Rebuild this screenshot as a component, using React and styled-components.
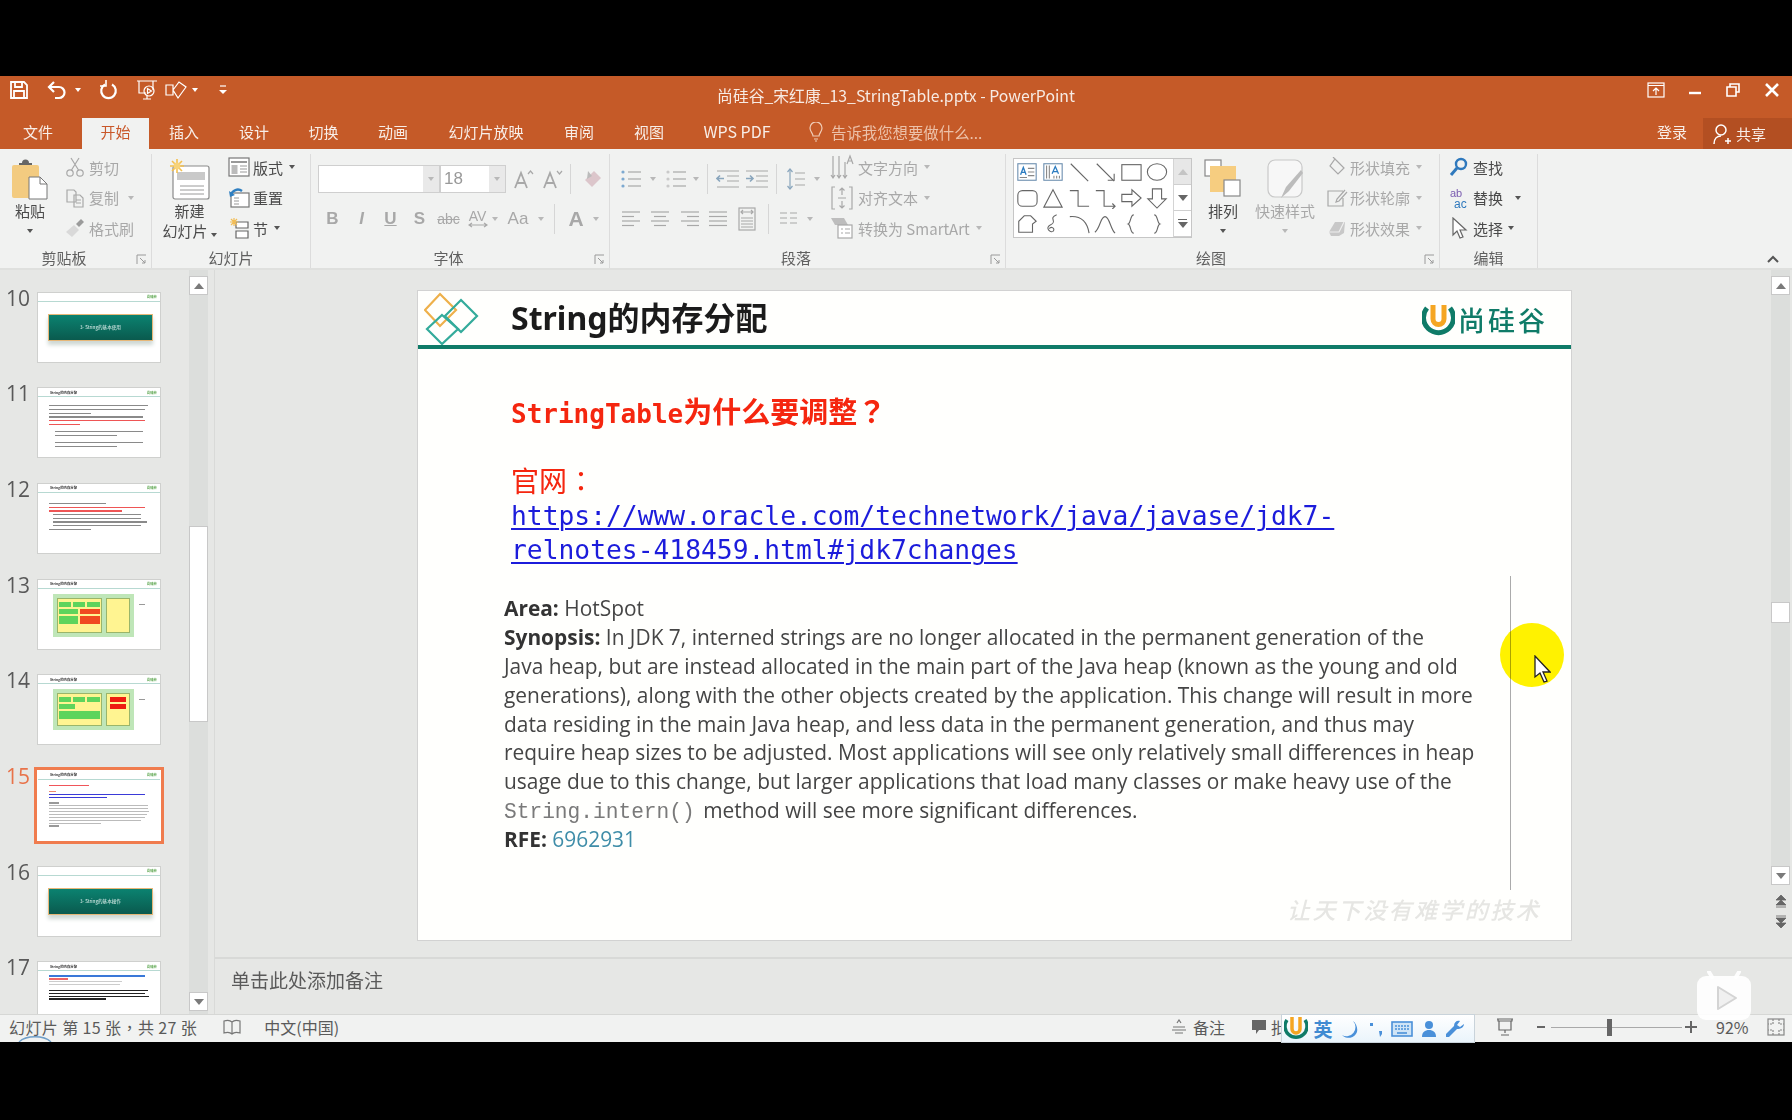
import React from "react";
import styled, { createGlobalStyle } from "styled-components";

const CJK = `"Noto Sans CJK SC", "Noto Sans", sans-serif`;
const ORANGE = "#c55a28";
const TEAL = "#0f7b68";
const DIS = "#a8a8a8";
const INK = "#4a4a4a";

const Global = createGlobalStyle`
  html, body { margin: 0; padding: 0; background: #000; }
  body { font-family: ${CJK}; }
`;

const Screen = styled.div`
  width: 1792px;
  height: 1120px;
  padding: 76px 0 78px;
  box-sizing: border-box;
  background: #000;
  overflow: hidden;
`;

const Win = styled.div`
  height: 966px;
  display: flex;
  flex-direction: column;
  background: #e6e7e5;
  filter: blur(0.45px);
`;

/* ---------- title bar ---------- */
const TitleBar = styled.div`
  height: 42px;
  background: ${ORANGE};
  display: grid;
  grid-template-columns: 1fr auto 1fr;
  color: #f7ebe4;
`;

const Qat = styled.div`
  display: flex;
  align-items: center;
  height: 28px;
  padding-left: 9px;
`;

const QatCell = styled.div`
  width: ${(p) => p.$w}px;
  margin-left: ${(p) => p.$ml || 0}px;
  display: flex;
  justify-content: center;
  align-items: center;
`;

const DocTitle = styled.div`
  font-size: 15.8px;
  line-height: 40px;
  color: #f7ebe4;
`;

const WinCtrls = styled.div`
  display: flex;
  justify-content: flex-end;
  align-items: center;
  height: 28px;
  padding-right: 1px;
`;

const WinBtn = styled.div`
  width: 38.5px;
  display: flex;
  justify-content: center;
`;

/* ---------- tabs ---------- */
const TabBar = styled.div`
  height: 31px;
  background: ${ORANGE};
  display: flex;
  align-items: stretch;
`;

const Tab = styled.div`
  width: ${(p) => p.$w}px;
  margin-right: ${(p) => p.$mr || 0}px;
  text-align: center;
  font-size: ${(p) => p.$fs || 15}px;
  line-height: 27px;
  color: ${(p) => (p.$active ? "#c9582a" : "#f8eee8")};
  background: ${(p) => (p.$active ? "#f1f2f1" : "transparent")};
`;

const TellMe = styled.div`
  margin-left: 19px;
  display: flex;
  align-items: center;
  height: 27px;
  gap: 8px;
  font-size: 15.4px;
  color: #ecc1a9;
`;

const TabRight = styled.div`
  margin-left: auto;
  display: flex;
  align-items: stretch;
`;

const Login = styled.div`
  font-size: 15px;
  line-height: 27px;
  color: #f8eee8;
  margin-right: 16px;
`;

const Share = styled.div`
  width: 89px;
  background: #b34f22;
  display: flex;
  align-items: center;
  padding-left: 9px;
  box-sizing: border-box;
  gap: 4px;
  font-size: 15px;
  color: #f8eee8;
`;

/* ---------- ribbon ---------- */
const Ribbon = styled.div`
  height: 121px;
  box-sizing: border-box;
  background: #f1f2f1;
  border-bottom: 2px solid #dfe0de;
  display: flex;
`;

const Group = styled.div`
  width: ${(p) => p.$w}px;
  box-sizing: border-box;
  position: relative;
  display: flex;
  flex-direction: column;
  margin-top: 5px;
  margin-bottom: 0;
  border-right: 1px solid #dcdcdc;
`;

const GroupBody = styled.div`
  flex: 1;
  display: flex;
  padding-left: ${(p) => p.$pl || 0}px;
  margin-top: -5px;
`;

const GroupLabel = styled.div`
  height: 22px;
  line-height: 24px;
  font-size: 15px;
  color: #5f5f5f;
  text-align: center;
  padding-right: ${(p) => (p.$launcher ? 23 : 0)}px;
`;

const Launcher = styled.svg`
  position: absolute;
  right: 4px;
  bottom: 3px;
`;

const LargeBtn = styled.div`
  width: ${(p) => p.$w}px;
  margin-left: ${(p) => p.$ml || 0}px;
  display: flex;
  flex-direction: column;
  align-items: center;
  padding-top: 10px;
  color: ${(p) => (p.$off ? DIS : INK)};
  font-size: 15px;
  line-height: 20px;
`;

const LargeIcon = styled.div`
  height: 42px;
  display: flex;
  align-items: flex-start;
`;

const SmallCol = styled.div`
  display: flex;
  flex-direction: column;
  padding-top: 3px;
  margin-left: ${(p) => p.$ml || 0}px;
`;

const SmallRow = styled.div`
  height: 30.5px;
  display: flex;
  align-items: center;
  font-size: 15px;
  white-space: nowrap;
  color: ${(p) => (p.$off ? DIS : INK)};
`;

const SmallIcon = styled.div`
  width: ${(p) => p.$w || 24}px;
  margin-right: ${(p) => p.$mr ?? 2}px;
  display: flex;
  justify-content: center;
`;

const Caret = styled.span`
  display: inline-block;
  margin-left: ${(p) => p.$ml ?? 6}px;
  margin-top: ${(p) => p.$mt || 0}px;
  width: 0;
  height: 0;
  border-left: 3.5px solid transparent;
  border-right: 3.5px solid transparent;
  border-top: 4px solid ${(p) => p.$c || (p.$off ? "#b8b8b8" : "#555")};
`;

const TwoRows = styled.div`
  display: flex;
  flex-direction: column;
  padding-top: 10px;
`;

const ToolRow = styled.div`
  height: 40px;
  display: flex;
  align-items: center;
`;

const Cell = styled.div`
  width: ${(p) => p.$w}px;
  margin-left: ${(p) => p.$ml || 0}px;
  height: 26px;
  flex: none;
  display: flex;
  flex-direction: ${(p) => (p.$col ? "column" : "row")};
  align-items: center;
  justify-content: center;
  color: ${DIS};
  font-size: ${(p) => p.$fs || 15}px;
  font-family: "Liberation Sans", sans-serif;
  font-weight: ${(p) => (p.$b ? 700 : 400)};
  font-style: ${(p) => (p.$i ? "italic" : "normal")};
  line-height: ${(p) => (p.$col ? "12px" : "normal")};
  text-decoration: ${(p) => p.$deco || "none"};
`;

const VSep = styled.div`
  width: 1px;
  height: 30px;
  background: #d6d6d6;
  margin: 0 ${(p) => p.$m ?? 8}px;
  flex: none;
`;

const FontBox = styled.div`
  display: flex;
  height: 28px;
  border: 1px solid #cfcfcf;
  box-sizing: border-box;
  background: #fff;
  width: ${(p) => p.$w}px;
  flex: none;
  font-size: 17px;
  font-family: "Liberation Sans", sans-serif;
  color: #999;
  align-items: center;
  padding-left: ${(p) => p.$pl || 0}px;
`;

const FontDrop = styled.div`
  margin-left: auto;
  width: 16px;
  height: 100%;
  background: #e9e9e9;
  display: flex;
  align-items: center;
  justify-content: center;
`;

const Gallery = styled.div`
  margin-top: 9px;
  width: 179px;
  height: 80px;
  flex: none;
  box-sizing: border-box;
  border: 1px solid #c6c6c6;
  background: #fff;
  display: flex;
`;

const GalleryGrid = styled.div`
  width: 159px;
  display: grid;
  grid-template-columns: repeat(6, 26px);
  grid-auto-rows: 26px;
  padding: 0;
  align-items: center;
  justify-items: center;
`;

const GalleryScroll = styled.div`
  flex: 1;
  display: flex;
  flex-direction: column;
  border-left: 1px solid #d4d4d4;
`;

const GalleryBtn = styled.div`
  flex: 1;
  background: ${(p) => (p.$off ? "#e7e7e7" : "#fff")};
  border-bottom: 1px solid #cfcfcf;
  display: flex;
  flex-direction: column;
  gap: 2px;
  align-items: center;
  justify-content: center;
`;

const GalleryDash = styled.div`
  width: 9px;
  height: 1px;
  background: #666;
`;

const Collapse = styled.div`
  flex: 1;
  display: flex;
  align-items: flex-end;
  justify-content: flex-end;
  padding: 0 13px 5px 0;
`;

/* ---------- main ---------- */
const Main = styled.div`
  flex: 1;
  min-height: 0;
  display: flex;
`;

const Side = styled.div`
  width: 215px;
  flex: none;
  display: flex;
  border-right: 1px solid #d9dad8;
  box-sizing: border-box;
`;

const ThumbList = styled.div`
  width: 189px;
  padding-top: 21.5px;
  box-sizing: border-box;
  overflow: hidden;
`;

const ThumbRow = styled.div`
  height: 95.7px;
  display: flex;
  flex: none;
`;

const ThumbNum = styled.div`
  width: 37px;
  padding-left: 6px;
  box-sizing: border-box;
  font-family: "Open Sans", sans-serif;
  font-size: 21px;
  line-height: 12px;
  color: ${(p) => (p.$on ? "#e8734a" : "#595959")};
`;

const Thumb = styled.div`
  width: 124px;
  height: 71px;
  flex: none;
  box-sizing: border-box;
  background: #fff;
  outline: ${(p) => (p.$on ? "3.5px solid #f07c4e" : "1px solid #cfd0ce")};
  outline-offset: ${(p) => (p.$on ? "0" : "-1px")};
  display: flex;
  flex-direction: column;
  overflow: hidden;
  box-shadow: ${(p) => (p.$on ? "0 0 0 3px #f07c4e" : "none")};
`;

const MiniHead = styled.div`
  height: 8px;
  flex: none;
  margin: 1px 1px 0;
  border-bottom: 1px solid #b7d9d2;
  display: flex;
  justify-content: space-between;
  align-items: center;
  padding: 0 3px 0 12px;
  font-size: 3.4px;
  font-weight: 700;
  color: #333;
`;

const MiniLogo = styled.span`
  color: #5aa54c;
  font-size: 3.4px;
`;

const MiniBanner = styled.div`
  margin: 12px 8px 0 11px;
  height: 25px;
  background: linear-gradient(#0b8270, #0a5a4e);
  border: 1px solid #e6b778;
  box-shadow: 0 4px 4px #cfd8d4;
  color: #e8f5f2;
  font-size: 4.6px;
  display: flex;
  align-items: center;
  justify-content: center;
`;

const MiniText = styled.div`
  padding: ${(p) => p.$pt}px 8px 0 ${(p) => p.$pl || 12}px;
  display: flex;
  flex-direction: column;
  gap: ${(p) => p.$gap ?? 2.4}px;
  filter: blur(0.3px);
`;

const MiniLine = styled.div`
  height: ${(p) => p.$h || 1.3}px;
  width: ${(p) => p.$w}%;
  margin-left: ${(p) => p.$ml || 0}px;
  background: ${(p) => p.$c || "#8a8a8a"};
`;

const MiniBoardRow = styled.div`
  display: flex;
  gap: 5px;
  margin: 5px 0 0 16px;
`;

const MiniBoard = styled.div`
  width: 81px;
  height: ${(p) => p.$h}px;
  background: #bfe6b8;
  padding: 4px;
  box-sizing: border-box;
  display: flex;
  gap: 4px;
`;

const MiniNote = styled.div`
  width: 6px;
  height: 1px;
  margin-top: 10px;
  background: #999;
`;

const MiniYellow = styled.div`
  flex: ${(p) => p.$f};
  background: #fff491;
  border: 1px solid #9ab56a;
  padding: 3px 1px 1px;
  display: flex;
  flex-direction: column;
  gap: 2px;
  align-items: ${(p) => (p.$center ? "center" : "stretch")};
`;

const MiniRow = styled.div`
  display: flex;
  gap: 2px;
`;

const MiniBlock = styled.div`
  flex: ${(p) => p.$f || 1};
  height: ${(p) => p.$h || 5}px;
  width: ${(p) => (p.$wd ? `${p.$wd}px` : "auto")};
  background: ${(p) => p.$c || "#5fd45c"};
`;

const VScroll = styled.div`
  width: 19px;
  flex: none;
  display: flex;
  flex-direction: column;
  padding-top: 6px;
  background: #dcdedc;
  height: ${(p) => p.$h}px;
`;

const ScrollBtn = styled.div`
  height: 19px;
  flex: none;
  box-sizing: border-box;
  margin-top: ${(p) => (p.$push ? "auto" : "0")};
  margin-bottom: ${(p) => p.$mb || 0}px;
  background: #fff;
  border: 1px solid #c8c8c8;
  display: flex;
  align-items: center;
  justify-content: center;
`;

const ScrollThumb = styled.div`
  height: ${(p) => p.$h}px;
  flex: none;
  margin-top: ${(p) => p.$mt}px;
  background: #fff;
  border: 1px solid #c8c8c8;
  box-sizing: border-box;
`;

const Editor = styled.div`
  flex: 1;
  min-width: 0;
  display: flex;
  flex-direction: column;
`;

const SlideArea = styled.div`
  height: 689px;
  flex: none;
  display: flex;
  border-bottom: 2px solid #d8d9d7;
  box-sizing: border-box;
`;

const Canvas = styled.div`
  flex: 1;
  padding: 20px 0 0 202px;
`;

const Slide = styled.div`
  width: 1155px;
  height: 651px;
  box-sizing: border-box;
  border: 1px solid #d2d2d2;
  background: #fffffd;
  position: relative;
  overflow: hidden;
`;

const SlideHead = styled.div`
  height: 54px;
  border-bottom: 4px solid ${TEAL};
  display: flex;
  align-items: center;
  padding: 0 23px 0 6px;
`;

const SlideTitle = styled.div`
  margin-left: 31px;
  font-family: "Noto Sans", ${CJK};
  font-weight: 700;
  font-size: 32px;
  color: #1b1b1b;
  line-height: 54px;
`;

const Brand = styled.div`
  margin-left: auto;
  display: flex;
  align-items: center;
  gap: 3px;
  font-size: 27px;
  font-weight: 500;
  color: ${TEAL};
  padding-top: 2px;
  letter-spacing: 3px;
`;

const Heading = styled.div`
  margin: 41px 0 0 93px;
  height: 40px;
  line-height: 40px;
  font-size: 29px;
  font-weight: 700;
  color: #f5260f;
  white-space: nowrap;
`;

const HeadingMono = styled.span`
  font-family: "DejaVu Sans Mono", monospace;
  font-size: 26px;
  font-weight: 700;
`;

const Punct = styled.span`
  font-family: "Noto Sans CJK TC", sans-serif;
`;

const Official = styled.div`
  margin: 32px 0 0 93px;
  height: 37px;
  line-height: 36px;
  font-size: 28px;
  color: #f5260f;
`;

const UrlLine = styled.div`
  margin-left: 93px;
  height: 34px;
  line-height: 34px;
  font-family: "DejaVu Sans Mono", monospace;
  font-size: 26.3px;
  color: #1c1cdb;
  white-space: nowrap;
  text-decoration: underline;
  text-decoration-thickness: 1.5px;
  text-underline-offset: 3px;
`;

const BodyText = styled.div`
  margin: 27px 0 0 86px;
  font-family: "Open Sans", sans-serif;
  font-size: 20.9px;
  line-height: 28.9px;
  color: #454545;
  white-space: nowrap;
`;

const BodyLine = styled.div`
  height: 28.9px;
`;

const Strong = styled.b`
  font-weight: 700;
  color: #333;
`;

const Code = styled.span`
  font-family: "Liberation Mono", monospace;
  font-size: 21.2px;
  color: #7a7a7a;
  margin-right: 3px;
`;

const RfeLink = styled.span`
  color: #3f8da8;
`;

const GuideLine = styled.div`
  position: absolute;
  left: 1092px;
  top: 285px;
  width: 1px;
  height: 314px;
  background: #ababab;
`;

const Highlight = styled.div`
  position: absolute;
  left: 1082px;
  top: 332px;
  width: 64px;
  height: 64px;
  border-radius: 50%;
  background: #fff200;
  mix-blend-mode: multiply;
`;

const Pointer = styled.svg`
  position: absolute;
  left: 1115px;
  top: 364px;
`;

const Watermark = styled.div`
  position: absolute;
  right: 30px;
  bottom: 14px;
  font-size: 23px;
  font-style: italic;
  letter-spacing: 2.4px;
  color: #e6e6e3;
  font-weight: 500;
`;

const RightRail = styled.div`
  width: 19px;
  margin-right: 2px;
  flex: none;
  display: flex;
  flex-direction: column;
  align-items: center;
  gap: 9px;
`;

const NavArrows = styled.div`
  display: flex;
  flex-direction: column;
  align-items: center;
  gap: 7px;
  color: #666;
`;

const Notes = styled.div`
  flex: 1;
  padding-left: 16px;
  font-size: 19px;
  line-height: 41px;
  color: #5a5a5a;
`;

/* ---------- status ---------- */
const Status = styled.div`
  height: 28px;
  flex: none;
  background: #f1f2f1;
  border-top: 1px solid #d6d7d5;
  box-sizing: border-box;
  padding-bottom: 3px;
  display: flex;
  align-items: center;
  font-size: 16px;
  color: #5a5a5a;
  position: relative;
  white-space: nowrap;
`;

const StatusItem = styled.div`
  margin-left: ${(p) => p.$ml}px;
  display: flex;
  align-items: center;
  gap: ${(p) => p.$gap || 0}px;
  flex: none;
  letter-spacing: ${(p) => p.$ls || 0}px;
`;

const Slider = styled.div`
  width: 131px;
  height: 1px;
  background: #a9a9a9;
  position: relative;
  margin-left: 5px;
`;

const SliderKnob = styled.div`
  position: absolute;
  left: 56px;
  top: -8px;
  width: 5px;
  height: 17px;
  background: #666;
`;

const ImeBar = styled.div`
  position: absolute;
  left: 1281px;
  top: -1px;
  width: 194px;
  height: 29px;
  box-sizing: border-box;
  background: linear-gradient(#ffffff, #eaf4fb);
  border: 1px solid #c9d3da;
  display: flex;
  align-items: center;
  padding-left: 2px;
  color: #3f8bd2;
  font-size: 19px;
  font-weight: 700;
`;

const ImeCell = styled.div`
  width: ${(p) => p.$w}px;
  flex: none;
  display: flex;
  justify-content: center;
`;

const PlayBadge = styled.svg`
  position: absolute;
  left: 1696px;
  top: -44px;
`;

const HintArc = styled.svg`
  position: absolute;
  left: 18px;
  bottom: 0;
`;

/* ---------- icons ---------- */
const Svg = ({ w = 20, h = 20, vb, children, ...rest }) => (
  <svg width={w} height={h} viewBox={vb || `0 0 ${w} ${h}`} fill="none" stroke="currentColor" strokeWidth="1.2" {...rest}>
    {children}
  </svg>
);

const LauncherIcon = () => (
  <Launcher width="11" height="11" viewBox="0 0 11 11" fill="none" stroke="#9a9a9a">
    <path d="M1 10V1h9" />
    <path d="M4 4l5 5M9 6v3H6" />
  </Launcher>
);

const PasteIcon = () => (
  <Svg w={38} h={42} stroke="none">
    <rect x="1" y="6" width="27" height="33" rx="2" fill="#f3cb80" />
    <path d="M8 6h13v-2h-3a3.5 3.5 0 0 0-7 0H8z" fill="#666" />
    <path d="M18 18h11l7 7v15H18z" fill="#fff" stroke="#777" strokeWidth="1" />
    <path d="M29 18v7h7" stroke="#777" strokeWidth="1" fill="none" />
  </Svg>
);

const ScissorsIcon = () => (
  <Svg w={20} h={22} stroke={DIS}>
    <circle cx="5" cy="17" r="3.2" />
    <circle cx="15" cy="17" r="3.2" />
    <path d="M6.5 14L14 2M13.5 14L6 2" />
  </Svg>
);

const CopyIcon = () => (
  <Svg w={20} h={20} stroke={DIS}>
    <path d="M2 2h7l2 2v10H2zM9 7h6l3 3v9H9z" />
    <path d="M11 12h5M11 15h5" />
  </Svg>
);

const BrushIcon = () => (
  <Svg w={22} h={20} stroke="none">
    <path d="M2 14l8-7 5 5-7 7z" fill="#d9d9d9" />
    <path d="M12 6l5-5 3 3-5 5z" fill="#9b9b9b" />
  </Svg>
);

const NewSlideIcon = () => (
  <Svg w={42} h={42} stroke="none">
    <rect x="4" y="7" width="36" height="33" rx="2" fill="#fff" stroke="#8a8a8a" strokeWidth="1.2" />
    <rect x="8" y="13" width="28" height="8" fill="#c9c9c9" />
    <path d="M11 27h24M11 31h24M11 35h24" stroke="#9a9a9a" strokeWidth="1" />
    <path d="M8 0v14M1 7h14M3 2l10 10M13 2L3 12" stroke="#f4c04e" strokeWidth="1.6" />
    <circle cx="8" cy="7" r="3.4" fill="#f7d37a" />
  </Svg>
);

const LayoutIcon = () => (
  <Svg w={22} h={20} stroke="#777">
    <rect x="1" y="1" width="20" height="18" fill="#fff" />
    <path d="M3 5h16" stroke="#999" strokeWidth="2" />
    <rect x="3.5" y="8" width="6" height="9" fill="#bbb" stroke="none" />
    <path d="M12 9h7M12 12h7M12 15h7" stroke="#999" />
  </Svg>
);

const ResetIcon = () => (
  <Svg w={22} h={20} stroke="#777">
    <rect x="3" y="5" width="18" height="14" fill="#fff" />
    <path d="M6 10h5M6 13h5M6 16h5" stroke="#999" />
    <path d="M3 7a7 7 0 0 1 11-4" stroke="#2f7fc1" strokeWidth="2.4" />
    <path d="M1 3l1 6 5-2z" fill="#2f7fc1" stroke="none" />
  </Svg>
);

const SectionIcon = () => (
  <Svg w={22} h={22} stroke="#666">
    <path d="M8 5h12v6H8zM8 14h12v7H8z" fill="#fff" />
    <path d="M2 5h8M6 1v8M3 2l6 6M9 2L3 8" stroke="#f2bd55" strokeWidth="1.2" />
  </Svg>
);

const Caps = ({ up }) => (
  <Svg w={22} h={24} stroke={DIS} strokeWidth="1.8">
    <path d="M3 21L9 6l6 15M5.5 16h7" />
    <path d={up ? "M16 7l2.5-3 2.5 3" : "M16 4l2.5 3 2.5-3"} strokeWidth="1.2" />
  </Svg>
);

const Eraser = () => (
  <Svg w={22} h={22} stroke="none">
    <path d="M4 12l9-9 7 7-9 9z" fill="#dcc6cb" />
    <path d="M7 3l-1 8 5-3z" fill="#bbb" />
  </Svg>
);

const Bullets = ({ num }) => (
  <Svg w={22} h={20} stroke={DIS}>
    {[3, 10, 17].map((y) => (
      <React.Fragment key={y}>
        <path d={`M8 ${y}h13`} />
        <circle cx="3" cy={y} r="1.6" fill={num ? "#c9c9c9" : "#7da9d0"} stroke="none" />
      </React.Fragment>
    ))}
  </Svg>
);

const Indent = ({ flip }) => (
  <Svg w={24} h={20} stroke={DIS}>
    <path d="M1 2h22M11 7h12M11 12h12M1 18h22" />
    <path d={flip ? "M1 9.5h7M5 6.5l3 3-3 3" : "M8 9.5H1M4 6.5l-3 3 3 3"} stroke="#8aa6bd" strokeWidth="1.6" />
  </Svg>
);

const LineSpacing = () => (
  <Svg w={20} h={24} stroke={DIS}>
    <path d="M4 2v20" stroke="#8aa6bd" />
    <path d="M1.5 5L4 2l2.500 3M1.500 19L4 22l2.500-3" stroke="#8aa6bd" />
    <path d="M9 6h10M9 12h10M9 18h10" />
  </Svg>
);

const Align = ({ mode }) => {
  const rows = mode === "j" ? [18, 18, 18, 18] : [18, 12, 18, 12];
  return (
    <Svg w={20} h={18} stroke={DIS}>
      {rows.map((len, i) => {
        const x = mode === "c" ? (20 - len) / 2 : mode === "r" ? 20 - len : 1;
        return <path key={i} d={`M${x} ${2 + i * 4.500}h${len}`} />;
      })}
    </Svg>
  );
};

const Distribute = () => (
  <Svg w={20} h={24} stroke={DIS}>
    <rect x="2" y="1" width="16" height="22" />
    <path d="M4 5h12M6 3L4 5l2 2M14 3l2 2-2 2M4 11h12M4 14h12M4 17h12M4 20h12" />
  </Svg>
);

const Columns = () => (
  <Svg w={20} h={18} stroke={DIS}>
    <path d="M1 3h7M1 8h7M1 13h7M11 3h7M11 8h7M11 13h7" />
  </Svg>
);

const TextDir = () => (
  <Svg w={24} h={26} stroke={DIS}>
    <path d="M3 2v22M9 2v22M15 8v16M1 21l2 3 2-3M7 21l2 3 2-3M13 21l2 3 2-3" />
    <path d="M17 10l3-8 3 8M18 7h4" />
  </Svg>
);

const AlignText = () => (
  <Svg w={24} h={26} stroke={DIS}>
    <path d="M5 2H2v22h3M19 2h3v22h-3" />
    <path d="M12 3v7M9.500 5.500L12 3l2.500 2.500M12 23v-7M9.500 20.500L12 23l2.500-2.500M8 13h8" />
  </Svg>
);

const SmartIcon = () => (
  <Svg w={24} h={24} stroke="none">
    <path d="M1 2h13l4 7H5z" fill="#bdbdbd" />
    <rect x="8" y="9" width="14" height="13" fill="#fff" stroke={DIS} />
    <path d="M11 13h2M15 13h5M11 17h2M15 17h5" stroke={DIS} />
  </Svg>
);

const S = { width: 22, height: 22, viewBox: "0 0 24 24", fill: "none", stroke: "#666", strokeWidth: 1.2 };

const SHAPES = [
  <svg {...S} key="tb"><rect x="2" y="3" width="20" height="18" stroke="#6d8fb0" /><path d="M5 15l3-8 3 8M6 12.500h4" stroke="#2c7cc0" strokeWidth="1.400" /><path d="M13 8h7M13 12h7M13 16h7M4 18h8" stroke="#888" /></svg>,
  <svg {...S} key="vt"><rect x="2" y="3" width="20" height="18" stroke="#6d8fb0" /><path d="M11 14l3.500-8 3.500 8M12 11.500h5" stroke="#2c7cc0" strokeWidth="1.400" /><path d="M5 5v14M8 5v14" stroke="#888" /><path d="M13 16v3M16 16v3M19 16v3" stroke="#888" /></svg>,
  <svg {...S} key="ln"><path d="M3 3l19 19" /></svg>,
  <svg {...S} key="ar"><path d="M3 3l19 19M15 21h7v-7" /></svg>,
  <svg {...S} key="rc"><rect x="2" y="4" width="21" height="17" /></svg>,
  <svg {...S} key="ov"><ellipse cx="12" cy="12" rx="10.500" ry="9" /></svg>,
  <svg {...S} key="rr"><rect x="2" y="4" width="21" height="17" rx="5" /></svg>,
  <svg {...S} key="tr"><path d="M12 3l10 19H2z" /></svg>,
  <svg {...S} key="el"><path d="M2 4h9v17h12" /></svg>,
  <svg {...S} key="ea"><path d="M2 4h9v17h12M20 18l3 3-3 3" /></svg>,
  <svg {...S} key="ra"><path d="M2 8h11V3l10 9-10 9v-5H2z" /></svg>,
  <svg {...S} key="da"><path d="M7 2h10v11h5l-10 10L2 13h5z" /></svg>,
  <svg {...S} key="sn"><path d="M3 21V9l6-6h7l6 6-4 3v9z" /></svg>,
  <svg {...S} key="sq"><path d="M16 2C6 6 18 9 9 13c-6 3 0 9 3 7 3-3-2-6-4-3" /></svg>,
  <svg {...S} key="cv"><path d="M2 4c12-1 19 6 21 18" /></svg>,
  <svg {...S} key="sc"><path d="M1 21C7 16 7 4 12 4s6 14 11 18" /></svg>,
  <svg {...S} key="lb"><path d="M15 2c-4 0-3 9-6 10 3 1 2 10 6 10" /></svg>,
  <svg {...S} key="rb"><path d="M9 2c4 0 3 9 6 10-3 1-2 10-6 10" /></svg>,
];

const TriUp = ({ c = "#7a7a7a" }) => <svg width="10" height="6"><path d="M0 6l5-6 5 6z" fill={c} /></svg>;
const TriDown = ({ c = "#7a7a7a" }) => <svg width="10" height="6"><path d="M0 0l5 6 5-6z" fill={c} /></svg>;

const Logo = () => (
  <svg width="33" height="33" viewBox="0 0 33 33" fill="none">
    <path d="M5 5a15 15 0 1 0 23 0" stroke={TEAL} strokeWidth="5" />
    <path d="M11 2v14a5.500 5.500 0 0 0 11 0V2" stroke="#f5a623" strokeWidth="5" />
  </svg>
);

const Diamonds = () => (
  <svg width="56" height="54" viewBox="0 0 56 54" fill="none" strokeWidth="2.200">
    <path d="M16 3l16 16-16 16L1 19z" stroke="#eeb04a" />
    <path d="M37 9l16 16-16 16-16-16z" stroke="#33ab9b" />
    <path d="M18 24l16 14-16 15L3 38z" stroke="#33ab9b" />
  </svg>
);

const Arrow = () => (
  <Pointer width="18" height="28" viewBox="0 0 18 28">
    <path d="M2 1v21l5-4 4 9 3-1-4-9h7z" fill="#fff" stroke="#222" strokeWidth="1.300" />
  </Pointer>
);

const DoubleArrow = ({ down }) => (
  <Svg w={12} h={14} stroke="none">
    {down ? (
      <path d="M1 1h10M1 3l5 5 5-5zM1 8l5 5 5-5z" fill="#666" stroke="#666" strokeWidth="0.800" />
    ) : (
      <path d="M1 13h10M1 11l5-5 5 5zM1 6l5-5 5 5z" fill="#666" stroke="#666" strokeWidth="0.800" />
    )}
  </Svg>
);

/* ---------- thumbnails ---------- */
const textBars = (rows) => rows.map((r, i) => <MiniLine key={i} $w={r[0]} $c={r[1]} $ml={r[2]} />);

const Banner = ({ text }) => (
  <>
    <MiniHead><span /><MiniLogo>尚硅谷</MiniLogo></MiniHead>
    <MiniBanner>{text}</MiniBanner>
  </>
);

const Head = () => (
  <MiniHead>String的内存分配<MiniLogo>尚硅谷</MiniLogo></MiniHead>
);

const THUMBS = [
  { n: 10, body: <Banner text="3- String的基本使用" /> },
  { n: 11, body: (
    <>
      <Head />
      <MiniText $pt={8}>
        {textBars([[95], [92], [40], [90], [92, "#e55"], [30, "#e55"]])}
        <MiniLine $w={0} />
        {textBars([[85, null, 6], [60, null, 6]])}
        <MiniLine $w={0} />
        {textBars([[85, null, 6], [60, null, 6]])}
      </MiniText>
    </>
  ) },
  { n: 12, body: (
    <>
      <Head />
      <MiniText $pt={10}>
        {textBars([[55], [92, "#e55"], [70, "#e55"], [85, null, 4], [85, null, 4], [90, null, 4], [85, null, 4], [40]])}
      </MiniText>
    </>
  ) },
  { n: 13, body: (
    <>
      <Head />
      <MiniBoardRow>
        <MiniBoard $h={43}>
          <MiniYellow $f={2}>
            <MiniRow><MiniBlock /><MiniBlock /><MiniBlock /></MiniRow>
            <MiniRow><MiniBlock /><MiniBlock $c="#f04a20" /></MiniRow>
            <MiniRow><MiniBlock $h={8} /><MiniBlock $h={8} $c="#f04a20" /></MiniRow>
          </MiniYellow>
          <MiniYellow $f={1} />
        </MiniBoard>
        <MiniNote />
      </MiniBoardRow>
    </>
  ) },
  { n: 14, body: (
    <>
      <Head />
      <MiniBoardRow>
        <MiniBoard $h={41}>
          <MiniYellow $f={2}>
            <MiniRow><MiniBlock /><MiniBlock /><MiniBlock /></MiniRow>
            <MiniRow><MiniBlock $wd={16} $f="none" /></MiniRow>
            <MiniRow><MiniBlock $h={8} /></MiniRow>
          </MiniYellow>
          <MiniYellow $f={1} $center>
            <MiniBlock $f="none" $wd={16} $c="#ee1c10" />
            <MiniBlock $f="none" $wd={16} $c="#ee1c10" />
          </MiniYellow>
        </MiniBoard>
        <MiniNote />
      </MiniBoardRow>
    </>
  ) },
  { n: 15, on: true, body: (
    <>
      <Head />
      <MiniText $pt={5} $gap={1.600}>
        {textBars([[38, "#f0555a"]])}
        <MiniLine $w={0} />
        {textBars([[7, "#ee8870"], [92, "#3a3ad8"], [56, "#3a3ad8"]])}
        <MiniLine $w={0} />
        {textBars([[10, "#999"], [95, "#bbb"], [95, "#bbb"], [96, "#bbb"], [94, "#bbb"], [92, "#bbb"], [88, "#bbb"], [50, "#bbb"], [10, "#999"]])}
      </MiniText>
    </>
  ) },
  { n: 16, body: <Banner text="3- String的基本操作" /> },
  { n: 17, body: (
    <>
      <Head />
      <MiniText $pt={4} $gap={1.600}>
        {textBars([[92, "#3a78d8"], [18, "#e66"], [70, "#ccc"], [68, "#ccc"]])}
        <MiniLine $w={0} />
        {textBars([[95, "#222"], [92, "#222"], [96, "#222"], [55, "#222"]])}
      </MiniText>
    </>
  ) },
];

const BODY = [
  <><Strong>Area:</Strong> HotSpot</>,
  <><Strong>Synopsis:</Strong> In JDK 7, interned strings are no longer allocated in the permanent generation of the</>,
  "Java heap, but are instead allocated in the main part of the Java heap (known as the young and old",
  "generations), along with the other objects created by the application. This change will result in more",
  "data residing in the main Java heap, and less data in the permanent generation, and thus may",
  "require heap sizes to be adjusted. Most applications will see only relatively small differences in heap",
  "usage due to this change, but larger applications that load many classes or make heavy use of the",
  <><Code>String.intern()</Code> method will see more significant differences.</>,
  <><Strong>RFE:</Strong> <RfeLink>6962931</RfeLink></>,
];

const TABS = [
  { t: "文件", w: 76, mr: 6 }, { t: "开始", w: 67, on: true }, { t: "插入", w: 70 }, { t: "设计", w: 70 },
  { t: "切换", w: 69 }, { t: "动画", w: 70 }, { t: "幻灯片放映", w: 116 }, { t: "审阅", w: 70 },
  { t: "视图", w: 70 }, { t: "WPS PDF", w: 106, fs: 16 },
];

const App = () => (
  <Screen>
    <Global />
    <Win>
      <TitleBar>
        <Qat>
          <QatCell $w={20}>
            <Svg w={20} h={20} stroke="#fff" strokeWidth="1.800">
              <path d="M2 2h13l3 3v13H2z" /><path d="M6 2v5h7V2M5 18v-7h10v7" />
            </Svg>
          </QatCell>
          <QatCell $w={28} $ml={14}>
            <Svg w={20} h={20} stroke="#fff" strokeWidth="2.200">
              <path d="M3 7h9a5 5 0 0 1 0 11H8" /><path d="M7 2L2 7l5 5" />
            </Svg>
          </QatCell>
          <QatCell $w={14}><Caret $ml={0} $c="#fff" /></QatCell>
          <QatCell $w={48}>
            <Svg w={20} h={20} stroke="#fff" strokeWidth="2.200">
              <path d="M13 4.500A7.300 7.300 0 1 1 6 4.500" /><path d="M7 0v6H1" strokeWidth="1.600" />
            </Svg>
          </QatCell>
          <QatCell $w={28}>
            <Svg w={22} h={22} stroke="#fff">
              <path d="M1 2h20M3 2v12h7M17 11V2M7 20h8M11 17v3" /><circle cx="13" cy="12" r="5" /><path d="M11.500 9.500v5l4-2.500z" />
            </Svg>
          </QatCell>
          <QatCell $w={30}>
            <Svg w={22} h={22} stroke="#fff">
              <path d="M1 6h7v10H1zM8 11l6-8 7 5-8 11z" />
            </Svg>
          </QatCell>
          <QatCell $w={8}><Caret $ml={0} $c="#fff" /></QatCell>
          <QatCell $w={48}>
            <Svg w={10} h={12} stroke="#fff"><path d="M2 2h6" /><path d="M1 6h8l-4 4z" fill="#fff" stroke="none" /></Svg>
          </QatCell>
        </Qat>
        <DocTitle>尚硅谷_宋红康_13_StringTable.pptx - PowerPoint</DocTitle>
        <WinCtrls>
          <WinBtn>
            <Svg w={18} h={16} stroke="#fff"><rect x="1" y="1" width="16" height="14" /><path d="M1 3.500h16M9 13V6M6 9l3-3 3 3" /></Svg>
          </WinBtn>
          <WinBtn><Svg w={14} h={14} stroke="#fff" strokeWidth="2.400"><path d="M1 10h12" /></Svg></WinBtn>
          <WinBtn>
            <Svg w={14} h={14} stroke="#fff" strokeWidth="1.600"><path d="M4 4V1h9v8h-3M1 4h9v9H1z" /></Svg>
          </WinBtn>
          <WinBtn><Svg w={14} h={14} stroke="#fff" strokeWidth="2.600"><path d="M1 1l12 12M13 1L1 13" /></Svg></WinBtn>
        </WinCtrls>
      </TitleBar>

      <TabBar>
        {TABS.map((x) => <Tab key={x.t} $w={x.w} $mr={x.mr} $fs={x.fs} $active={x.on}>{x.t}</Tab>)}
        <TellMe>
          <Svg w={14} h={20} stroke="#f0cdb8"><path d="M4 14c0-3-3-4-3-8a6 6 0 0 1 12 0c0 4-3 5-3 8zM5 17h4M6 19h2" /></Svg>
          告诉我您想要做什么...
        </TellMe>
        <TabRight>
          <Login>登录</Login>
          <Share>
            <Svg w={20} h={22} stroke="#fff" strokeWidth="1.500">
              <circle cx="9" cy="7" r="5" /><path d="M2 21c0-5 3-8 7-8M13 18h6M16 15v6" />
            </Svg>
            共享
          </Share>
        </TabRight>
      </TabBar>

      <Ribbon>
        <Group $w={152}>
          <GroupBody>
            <LargeBtn $w={60}>
              <LargeIcon><PasteIcon /></LargeIcon>
              粘贴
              <Caret $ml={0} $mt={8} />
            </LargeBtn>
            <SmallCol $ml={3}>
              <SmallRow $off><SmallIcon><ScissorsIcon /></SmallIcon>剪切</SmallRow>
              <SmallRow $off><SmallIcon><CopyIcon /></SmallIcon>复制<Caret $off $ml={9} /></SmallRow>
              <SmallRow $off><SmallIcon><BrushIcon /></SmallIcon>格式刷</SmallRow>
            </SmallCol>
          </GroupBody>
          <GroupLabel $launcher>剪贴板</GroupLabel>
          <LauncherIcon />
        </Group>

        <Group $w={159}>
          <GroupBody>
            <LargeBtn $w={75}>
              <LargeIcon><NewSlideIcon /></LargeIcon>
              新建
              <span>幻灯片<Caret $ml={3} /></span>
            </LargeBtn>
            <SmallCol>
              <SmallRow><SmallIcon><LayoutIcon /></SmallIcon>版式<Caret /></SmallRow>
              <SmallRow><SmallIcon><ResetIcon /></SmallIcon>重置</SmallRow>
              <SmallRow><SmallIcon><SectionIcon /></SmallIcon>节<Caret /></SmallRow>
            </SmallCol>
          </GroupBody>
          <GroupLabel>幻灯片</GroupLabel>
        </Group>

        <Group $w={299}>
          <GroupBody $pl={7}>
            <TwoRows>
              <ToolRow>
                <FontBox $w={122}><FontDrop><Caret $off $ml={0} /></FontDrop></FontBox>
                <FontBox $w={66} $pl={3}>18<FontDrop><Caret $off $ml={0} /></FontDrop></FontBox>
                <Cell $w={29} $ml={2}><Caps up /></Cell>
                <Cell $w={29}><Caps /></Cell>
                <VSep $m={4} />
                <Cell $w={34}><Eraser /></Cell>
              </ToolRow>
              <ToolRow>
                <Cell $w={29} $b $fs={17}>B</Cell>
                <Cell $w={29} $i $b $fs={17}>I</Cell>
                <Cell $w={29} $deco="underline" $b $fs={17}>U</Cell>
                <Cell $w={29} $b $fs={17}>S</Cell>
                <Cell $w={29} $fs={14} $deco="line-through">abc</Cell>
                <Cell $w={29} $fs={14} $col>
                  AV
                  <Svg w={20} h={6} stroke={DIS}><path d="M1 3h18M4 1L1 3l3 2M16 1l3 2-3 2" /></Svg>
                </Cell>
                <Caret $off $ml={0} />
                <Cell $w={40} $fs={17}>Aa</Cell>
                <Caret $off $ml={0} />
                <VSep $m={10} />
                <Cell $w={22} $fs={21} $b>A</Cell>
                <Caret $off $ml={6} />
              </ToolRow>
            </TwoRows>
          </GroupBody>
          <GroupLabel $launcher>字体</GroupLabel>
          <LauncherIcon />
        </Group>

        <Group $w={396}>
          <GroupBody $pl={7}>
            <TwoRows>
              <ToolRow>
                <Cell $w={28}><Bullets /></Cell>
                <Cell $w={16}><Caret $off $ml={0} /></Cell>
                <Cell $w={30}><Bullets num /></Cell>
                <Cell $w={10}><Caret $off $ml={0} /></Cell>
                <VSep $m={6} />
                <Cell $w={28}><Indent /></Cell>
                <Cell $w={29}><Indent flip /></Cell>
                <VSep $m={5} />
                <Cell $w={28}><LineSpacing /></Cell>
                <Cell $w={14}><Caret $off $ml={0} /></Cell>
              </ToolRow>
              <ToolRow>
                <Cell $w={28}><Align mode="l" /></Cell>
                <Cell $w={29}><Align mode="c" /></Cell>
                <Cell $w={29}><Align mode="r" /></Cell>
                <Cell $w={29}><Align mode="j" /></Cell>
                <Cell $w={29}><Distribute /></Cell>
                <VSep $m={7} />
                <Cell $w={26}><Columns /></Cell>
                <Cell $w={16}><Caret $off $ml={0} /></Cell>
              </ToolRow>
            </TwoRows>
            <SmallCol $ml={5}>
              <SmallRow $off><SmallIcon $w={26} $mr={3}><TextDir /></SmallIcon>文字方向<Caret $off /></SmallRow>
              <SmallRow $off><SmallIcon $w={26} $mr={3}><AlignText /></SmallIcon>对齐文本<Caret $off /></SmallRow>
              <SmallRow $off><SmallIcon $w={26} $mr={3}><SmartIcon /></SmallIcon>转换为 SmartArt<Caret $off /></SmallRow>
            </SmallCol>
          </GroupBody>
          <GroupLabel $launcher>段落</GroupLabel>
          <LauncherIcon />
        </Group>

        <Group $w={434}>
          <GroupBody $pl={7}>
            <Gallery>
              <GalleryGrid>{SHAPES}</GalleryGrid>
              <GalleryScroll>
                <GalleryBtn $off><TriUp c="#c4c4c4" /></GalleryBtn>
                <GalleryBtn><TriDown c="#666" /></GalleryBtn>
                <GalleryBtn><GalleryDash /><TriDown c="#666" /></GalleryBtn>
              </GalleryScroll>
            </Gallery>
            <LargeBtn $w={50} $ml={6}>
              <LargeIcon>
                <Svg w={38} h={40} stroke="none">
                  <rect x="1" y="1" width="16" height="16" fill="#fff" stroke="#888" />
                  <rect x="6" y="7" width="26" height="26" fill="#f6cd80" />
                  <rect x="20" y="21" width="16" height="16" fill="#fff" stroke="#888" />
                </Svg>
              </LargeIcon>
              排列
              <Caret $ml={0} $mt={8} />
            </LargeBtn>
            <LargeBtn $w={74} $off>
              <LargeIcon>
                <Svg w={40} h={42} stroke="none">
                  <rect x="3" y="1" width="34" height="37" rx="7" fill="#f7f7f7" stroke="#c8c8c8" />
                  <path d="M38 14L24 32l-8 7 5-11 15-17z" fill="#bcbcbc" />
                </Svg>
              </LargeIcon>
              快速样式
              <Caret $off $ml={0} $mt={8} />
            </LargeBtn>
            <SmallCol $ml={4}>
              <SmallRow $off><SmallIcon $w={22}><Svg w={22} h={20} stroke={DIS}><path d="M9 2l9 9-6 6-8-8zM7 0l3 3" /></Svg></SmallIcon>形状填充<Caret $off /></SmallRow>
              <SmallRow $off><SmallIcon $w={22}><Svg w={22} h={20} stroke={DIS}><path d="M17 3H2v15h15v-8M19 2l-8 9-1 3 3-1 8-9" /></Svg></SmallIcon>形状轮廓<Caret $off /></SmallRow>
              <SmallRow $off><SmallIcon $w={22}><Svg w={22} h={20} stroke="none"><path d="M3 14l6-10h10l-1 11-5 3H5z" fill="#c8c8c8" /><path d="M3 14h10l5-10" stroke="#eee" /></Svg></SmallIcon>形状效果<Caret $off /></SmallRow>
            </SmallCol>
          </GroupBody>
          <GroupLabel $launcher>绘图</GroupLabel>
          <LauncherIcon />
        </Group>

        <Group $w={98}>
          <GroupBody $pl={7}>
            <SmallCol>
              <SmallRow>
                <SmallIcon>
                  <Svg w={20} h={20} stroke="#2f79bd" strokeWidth="2.400"><circle cx="12" cy="7" r="5" /><path d="M8 11l-6 7" strokeWidth="3" /></Svg>
                </SmallIcon>查找
              </SmallRow>
              <SmallRow>
                <SmallIcon>
                  <Svg w={22} h={22} stroke="none">
                    <text x="2" y="10" fontSize="11" fill="#7b5cb0" fontFamily="Liberation Sans">ab</text>
                    <text x="6" y="21" fontSize="12" fill="#2f79bd" fontFamily="Liberation Sans">ac</text>
                  </Svg>
                </SmallIcon>替换<Caret $ml={12} />
              </SmallRow>
              <SmallRow>
                <SmallIcon>
                  <Svg w={18} h={22} stroke="#666"><path d="M3 1v17l4-4 3 7 3-1-3-7h6z" fill="#fff" /></Svg>
                </SmallIcon>选择<Caret $ml={5} />
              </SmallRow>
            </SmallCol>
          </GroupBody>
          <GroupLabel>编辑</GroupLabel>
        </Group>

        <Collapse>
          <Svg w={12} h={8} stroke="#555" strokeWidth="2"><path d="M1 7l5-5 5 5" /></Svg>
        </Collapse>
      </Ribbon>

      <Main>
        <Side>
          <ThumbList>
            {THUMBS.map((t) => (
              <ThumbRow key={t.n}>
                <ThumbNum $on={t.on}>{t.n}</ThumbNum>
                <Thumb $on={t.on}>{t.body}</Thumb>
              </ThumbRow>
            ))}
          </ThumbList>
          <VScroll $h={738}>
            <ScrollBtn><TriUp /></ScrollBtn>
            <ScrollThumb $h={196} $mt={231} />
            <ScrollBtn $push $mb={3}><TriDown /></ScrollBtn>
          </VScroll>
        </Side>

        <Editor>
          <SlideArea>
            <Canvas>
              <Slide>
                <SlideHead>
                  <Diamonds />
                  <SlideTitle>String的内存分配</SlideTitle>
                  <Brand><Logo />尚硅谷</Brand>
                </SlideHead>
                <Heading><HeadingMono>StringTable</HeadingMono>为什么要调整<Punct>？</Punct></Heading>
                <Official>官网<Punct>：</Punct></Official>
                <UrlLine>https://www.oracle.com/technetwork/java/javase/jdk7-</UrlLine>
                <UrlLine>relnotes-418459.html#jdk7changes</UrlLine>
                <BodyText>
                  {BODY.map((line, i) => <BodyLine key={i}>{line}</BodyLine>)}
                </BodyText>
                <GuideLine />
                <Highlight />
                <Arrow />
                <Watermark>让天下没有难学的技术</Watermark>
              </Slide>
            </Canvas>
            <RightRail>
              <VScroll $h={609}>
                <ScrollBtn><TriUp /></ScrollBtn>
                <ScrollThumb $h={21} $mt={307} />
                <ScrollBtn $push><TriDown /></ScrollBtn>
              </VScroll>
              <NavArrows>
                <DoubleArrow />
                <DoubleArrow down />
              </NavArrows>
            </RightRail>
          </SlideArea>
          <Notes>单击此处添加备注</Notes>
        </Editor>
      </Main>

      <Status>
        <StatusItem $ml={9} $ls={0.4}>幻灯片 第 15 张<Punct>，</Punct>共 27 张</StatusItem>
        <StatusItem $ml={26}>
          <Svg w={18} h={16} stroke="#777"><path d="M9 3C7 1 4 1 1 2v12c3-1 6-1 8 1 2-2 5-2 8-1V2c-3-1-6-1-8 1zM9 3v12" /></Svg>
        </StatusItem>
        <StatusItem $ml={23}>中文(中国)</StatusItem>
        <StatusItem $ml={832} $gap={6}>
          <Svg w={16} h={16} stroke="#777"><path d="M6 4l2-3 2 3M2 8h12M1 11h14M4 14h8" /></Svg>
          备注
        </StatusItem>
        <StatusItem $ml={26} $gap={4}>
          <Svg w={16} h={16} stroke="none"><path d="M1 1h14v10H8l-3 4v-4H1z" fill="#666" /></Svg>
          批注
        </StatusItem>
        <StatusItem $ml={193}>
          <Svg w={18} h={20} stroke="#666"><path d="M1 2h16M2 2h14v2H2zM3 4v9h12V4M9 13v3M5 18h8" /></Svg>
        </StatusItem>
        <StatusItem $ml={22}>
          <Svg w={10} h={4} stroke="#666" strokeWidth="2"><path d="M1 2h8" /></Svg>
          <Slider><SliderKnob /></Slider>
          <Svg w={14} h={14} stroke="#666" strokeWidth="2" style={{ marginLeft: 2 }}><path d="M1 7h12M7 1v12" /></Svg>
        </StatusItem>
        <StatusItem $ml={18}>92%</StatusItem>
        <StatusItem $ml={18}>
          <Svg w={18} h={18} stroke="#888"><rect x="1" y="1" width="16" height="16" /><path d="M6 1v5H1M12 1v5h5M6 17v-5H1M12 17v-5h5" strokeDasharray="2 1" /></Svg>
        </StatusItem>

        <HintArc width="34" height="7" viewBox="0 0 34 7" fill="none"><path d="M1 7C8 0 26 0 33 7" stroke="#6f9fc9" strokeWidth="1.300" /></HintArc>

        <ImeBar>
          <ImeCell $w={24}>
            <Svg w={24} h={26} stroke="none">
              <path d="M3 4a11 11 0 1 0 18 0" stroke={TEAL} strokeWidth="3.500" fill="none" />
              <path d="M8 1v12a4 4 0 0 0 8 0V1" stroke="#f5a623" strokeWidth="3.500" fill="none" />
            </Svg>
          </ImeCell>
          <ImeCell $w={30}>英</ImeCell>
          <ImeCell $w={24}><Svg w={20} h={20} stroke="none"><path d="M13 2a9 9 0 0 1-11 14 9 9 0 0 0 15-3c1-4-1-9-4-11z" fill="#4a90d9" /></Svg></ImeCell>
          <ImeCell $w={28}><Svg w={16} h={18} stroke="none"><rect x="2" y="3" width="3" height="3" fill="#4a90d9" /><path d="M11 11h3v3l-2 3z" fill="#4a90d9" /></Svg></ImeCell>
          <ImeCell $w={24}><Svg w={22} h={18} stroke="#4a90d9"><rect x="1" y="2" width="20" height="14" fill="#cfe4f6" strokeWidth="1.600" /><path d="M4 6h14M4 9h14" strokeDasharray="2 1" strokeWidth="1.600" /><path d="M6 13h10" strokeWidth="1.600" /></Svg></ImeCell>
          <ImeCell $w={30}><Svg w={16} h={18} stroke="none"><circle cx="8" cy="5" r="4" fill="#4a90d9" /><path d="M1 17c0-5 3-7 7-7s7 2 7 7z" fill="#4a90d9" /></Svg></ImeCell>
          <ImeCell $w={22}><Svg w={20} h={20} stroke="none"><path d="M19 5l-4 3-3-2 3-4c-3-1-6 1-6 5L1 15v3h3l8-8c4 0 7-2 7-5z" fill="#4a90d9" /></Svg></ImeCell>
        </ImeBar>

        <PlayBadge width="56" height="50" viewBox="0 0 56 50">
          <path d="M16 6l-3-5M40 6l3-5" stroke="#fff" strokeWidth="4" strokeLinecap="round" opacity="0.9" />
          <rect x="1" y="5" width="54" height="44" rx="9" fill="#fff" opacity="0.9" />
          <path d="M22 16l18 11-18 11z" fill="#f0f0f0" stroke="#d4d4d4" strokeWidth="2" strokeLinejoin="round" />
        </PlayBadge>
      </Status>
    </Win>
  </Screen>
);

export default App;
